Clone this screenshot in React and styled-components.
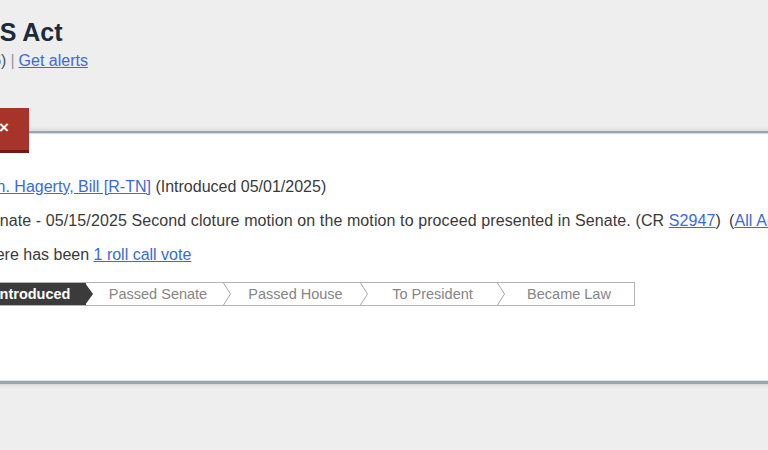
import React from 'react';
import styled, { createGlobalStyle } from 'styled-components';

const GlobalStyle = createGlobalStyle`
  html, body {
    margin: 0;
    padding: 0;
    background: #eeeeee;
    overflow: hidden;
  }
  body {
    font-family: 'Liberation Sans', Arial, sans-serif;
    color: #3a3a3a;
  }
`;

const Page = styled.div`
  padding-top: 17px;
  width: 768px;
  height: 450px;
  overflow: hidden;
`;

const Main = styled.div`
  margin-left: -197px;
  width: 1200px;
`;

const Title = styled.h1`
  margin: 0 0 0 16px;
  font-size: 25px;
  line-height: 30px;
  font-weight: bold;
  color: #1e2a3b;
  white-space: nowrap;
`;

const SubTitle = styled.div`
  margin-top: 4px;
  font-size: 16px;
  line-height: 20px;
  color: #555;
  white-space: nowrap;
`;

const Pipe = styled.span`
  color: #999;
  margin: 0 4px;
`;

const Link = styled.a`
  color: #3a6bd4;
  text-decoration: underline;
  cursor: pointer;
`;

const Card = styled.section`
  position: relative;
  margin-top: 60px;
  background: #fff;
  border-top: 2px solid #9ba6b1;
  border-bottom: 3px solid #9ba6b1;
  box-shadow: inset 0 1px 0 #d0dae4, inset 0 -1px 0 #dbe4ec, 0 -2px 4px rgba(0, 0, 0, 0.08),
    0 2px 4px rgba(0, 0, 0, 0.08);
  padding: 44px 20px 75px;
`;

const CloseTab = styled.button`
  position: absolute;
  top: -25px;
  left: 176px;
  width: 50px;
  height: 45px;
  padding: 0 0 3px;
  border: 0;
  border-bottom: 3px solid #6f1b13;
  background: #a7342a;
  color: #fff;
  font-family: 'Liberation Sans', Arial, sans-serif;
  font-size: 17px;
  font-weight: bold;
  line-height: 1;
  z-index: 2;
`;

const Overview = styled.div`
  display: grid;
  grid-template-columns: 154px 1fr;
  row-gap: 14px;
`;

const Label = styled.div`
  font-size: 16px;
  line-height: 20px;
  font-weight: bold;
  color: #333;
  white-space: nowrap;
  margin-top: ${(p) => p.$top || 0}px;
`;

const Value = styled.div`
  font-size: 16px;
  line-height: 20px;
  color: #3a3a3a;
  white-space: nowrap;
  margin-top: ${(p) => p.$top || 0}px;
  margin-left: ${(p) => p.$shift || 0}px;
  letter-spacing: ${(p) => p.$track || 0}px;
`;

const Spacer = styled.span`
  margin-left: 8px;
`;

const Tracker = styled.ol`
  display: flex;
  margin: 0;
  padding: 0;
  list-style: none;
  height: 22px;
  width: fit-content;
  border-top: 1px solid #b3b3b3;
  border-bottom: 1px solid #b3b3b3;
  border-right: 1px solid #b3b3b3;
`;

const Step = styled.li`
  position: relative;
  flex: none;
  width: ${(p) => p.$w}px;
  display: flex;
  align-items: center;
  justify-content: center;
  padding-left: ${(p) => p.$pad || 0}px;
  box-sizing: border-box;
  font-size: 14.5px;
  line-height: 22px;
  color: ${(p) => (p.$current ? '#fff' : '#858585')};
  background: ${(p) => (p.$current ? '#3b3b3b' : '#fff')};
  font-weight: ${(p) => (p.$current ? 'bold' : 'normal')};
`;

const Chevron = styled.svg`
  position: absolute;
  top: 0;
  right: -8px;
  width: 9px;
  height: 22px;
  z-index: 1;
  overflow: visible;
`;

const steps = [
  { name: 'Introduced', w: 106, current: true, pad: 0 },
  { name: 'Passed Senate', w: 138, pad: 6 },
  { name: 'Passed House', w: 137, pad: 6 },
  { name: 'To President', w: 137, pad: 6 },
  { name: 'Became Law', w: 136, pad: 6, last: true },
];

function TrackerBar() {
  return (
    <Tracker>
      {steps.map((s) => (
        <Step key={s.name} $w={s.w} $pad={s.pad} $current={s.current}>
          {s.name}
          {!s.last && (
            <Chevron viewBox="0 0 9 22">
              {s.current ? (
                <polygon points="0,0 8,11 0,22" fill="#3b3b3b" />
              ) : (
                <polyline points="0.5,0 7.5,11 0.5,22" fill="none" stroke="#a8a8a8" strokeWidth="1" />
              )}
            </Chevron>
          )}
        </Step>
      ))}
    </Tracker>
  );
}

export default function App() {
  return (
    <Page>
      <GlobalStyle />
      <Main>
        <Title>S.1582 - GENIUS Act</Title>
        <SubTitle>
          119th Congress (2025-2026)
          <Pipe>|</Pipe>
          <Link>Get alerts</Link>
        </SubTitle>

        <Card>
          <CloseTab aria-label="Close">×</CloseTab>
          <Overview>
            <Label>Sponsor:</Label>
            <Value>
              <Link>Sen. Hagerty, Bill [R-TN]</Link> (Introduced 05/01/2025)
            </Value>

            <Label>Latest Action:</Label>
            <Value $shift={3} $track={0.1}>
              Senate - 05/15/2025 Second cloture motion on the motion to proceed presented in Senate. (CR{' '}
              <Link>S2947</Link>)
              <Spacer>
                (<Link>All Actions</Link>)
              </Spacer>
            </Value>

            <Label>Roll Call Votes:</Label>
            <Value>
              There has been <Link>1 roll call vote</Link>
            </Value>

            <Label $top={3}>Tracker:</Label>
            <Value $top={3} $shift={3}>
              <TrackerBar />
            </Value>
          </Overview>
        </Card>
      </Main>
    </Page>
  );
}
